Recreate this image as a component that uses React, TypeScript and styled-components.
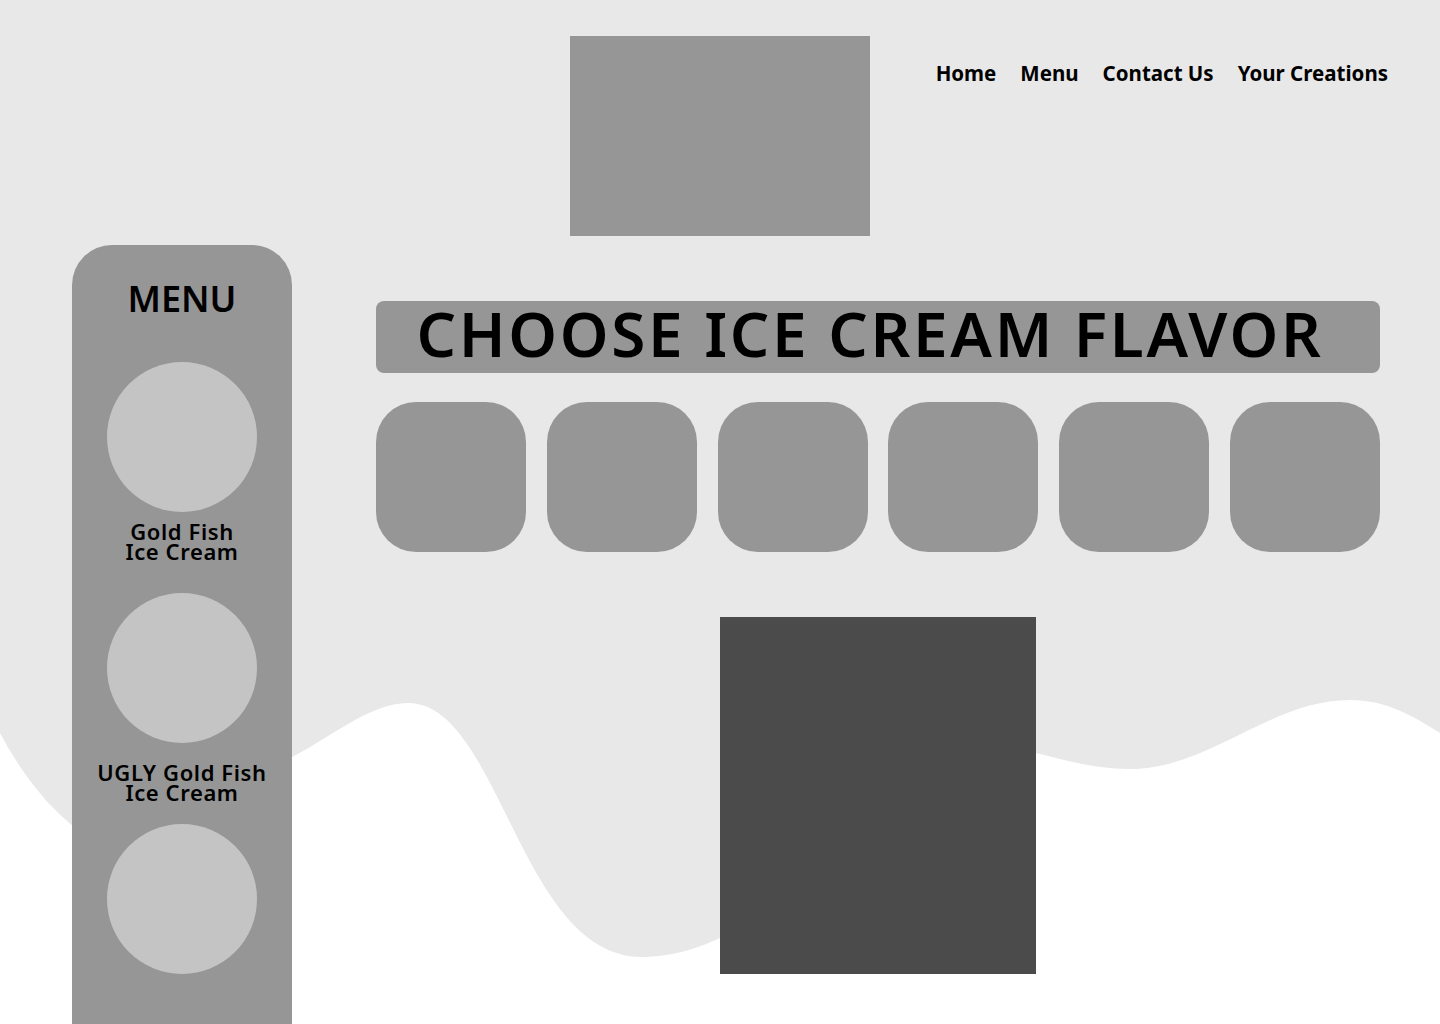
import styled, { createGlobalStyle } from 'styled-components'

const GlobalStyle = createGlobalStyle`
  html, body {
    margin: 0;
    padding: 0;
    background: #ffffff;
    font-family: 'Noto Sans', 'Open Sans', sans-serif;
    color: #000;
  }
`

const Page = styled.div`
  position: relative;
  width: 1440px;
  height: 1024px;
  overflow: hidden;
  background: #ffffff;
`

const Backdrop = styled.svg`
  position: absolute;
  top: 0;
  left: 0;
  z-index: 0;
`

const Layer = styled.div`
  position: relative;
  z-index: 1;
`

const Header = styled.header`
  display: grid;
  grid-template-columns: 1fr 300px 1fr;
  align-items: start;
  padding-top: 36px;
`

const Logo = styled.div`
  grid-column: 2;
  width: 300px;
  height: 200px;
  background: #969696;
`

const Nav = styled.nav`
  grid-column: 3;
  display: flex;
  justify-content: flex-end;
  gap: 24px;
  padding: 24px 52px 0 0;
`

const NavLink = styled.a`
  font-size: 20.5px;
  font-weight: 700;
  line-height: 26px;
  color: #000;
  text-decoration: none;
  white-space: nowrap;
`

const Main = styled.div`
  display: flex;
  align-items: flex-start;
  gap: 84px;
  padding: 9px 60px 0 72px;
`

const Sidebar = styled.aside`
  width: 220px;
  height: 820px;
  flex-shrink: 0;
  background: #969696;
  border-radius: 40px 40px 0 0;
  display: flex;
  flex-direction: column;
  align-items: center;
  padding-top: 34px;
  box-sizing: border-box;
`

const SidebarTitle = styled.h2`
  margin: 0 0 43px;
  font-size: 36px;
  font-weight: 600;
  line-height: 40px;
`

const MenuItem = styled.div`
  display: flex;
  flex-direction: column;
  align-items: center;
`

const Scoop = styled.div`
  width: 150px;
  height: 150px;
  border-radius: 50%;
  background: #c4c4c4;
`

const ItemLabel = styled.div<{ $offset: number }>`
  height: 81px;
  padding-top: ${(p) => p.$offset}px;
  box-sizing: border-box;
  font-size: 22px;
  font-weight: 600;
  letter-spacing: 0.6px;
  line-height: 20px;
  text-align: center;
  white-space: nowrap;
`

const Content = styled.section`
  flex: 1;
  display: flex;
  flex-direction: column;
  padding-top: 56px;
`

const TitleBar = styled.div`
  height: 72px;
  background: #969696;
  border-radius: 8px;
  display: flex;
  align-items: center;
  justify-content: center;
`

const Title = styled.h1`
  margin: 0 16px 8px 0;
  font-size: 62px;
  font-weight: 600;
  letter-spacing: 2.7px;
  line-height: 64px;
  white-space: nowrap;
`

const Flavors = styled.div`
  display: flex;
  justify-content: space-between;
  margin-top: 29px;
`

const Flavor = styled.div`
  width: 150px;
  height: 150px;
  border-radius: 40px;
  background: #969696;
`

const Preview = styled.div`
  align-self: center;
  width: 316px;
  height: 357px;
  margin-top: 65px;
  background: #4b4b4b;
`

const navItems = ['Home', 'Menu', 'Contact Us', 'Your Creations']
const menuItems: { lines: string[]; offset: number }[] = [
  { lines: ['Gold Fish', 'Ice Cream'], offset: 9 },
  { lines: ['UGLY Gold Fish', 'Ice Cream'], offset: 19 },
  { lines: [], offset: 0 },
]

function App() {
  return (
    <Page>
      <GlobalStyle />
      <Backdrop width="1440" height="1024" viewBox="0 0 1440 1024">
        <path
          fill="#e8e8e8"
          d="M0 0 H1440 V733 C1410 714 1385 700 1350 700 C1270 700 1210 769 1130 769 C1095 769 1065 760 1036 753 C900 720 800 957 642 957 C520 957 500 703 408 703 C370 703 330 738 292 757 C230 790 170 880 110 850 C60 825 25 780 0 733 Z"
        />
      </Backdrop>
      <Layer>
        <Header>
          <Logo />
          <Nav>
            {navItems.map((item) => (
              <NavLink key={item}>{item}</NavLink>
            ))}
          </Nav>
        </Header>
        <Main>
          <Sidebar>
            <SidebarTitle>MENU</SidebarTitle>
            {menuItems.map((item, i) => (
              <MenuItem key={i}>
                <Scoop />
                {item.lines.length > 0 && (
                  <ItemLabel $offset={item.offset}>
                    {item.lines[0]}
                    <br />
                    {item.lines[1]}
                  </ItemLabel>
                )}
              </MenuItem>
            ))}
          </Sidebar>
          <Content>
            <TitleBar>
              <Title>CHOOSE ICE CREAM FLAVOR</Title>
            </TitleBar>
            <Flavors>
              {Array.from({ length: 6 }).map((_, i) => (
                <Flavor key={i} />
              ))}
            </Flavors>
            <Preview />
          </Content>
        </Main>
      </Layer>
    </Page>
  )
}

export default App
